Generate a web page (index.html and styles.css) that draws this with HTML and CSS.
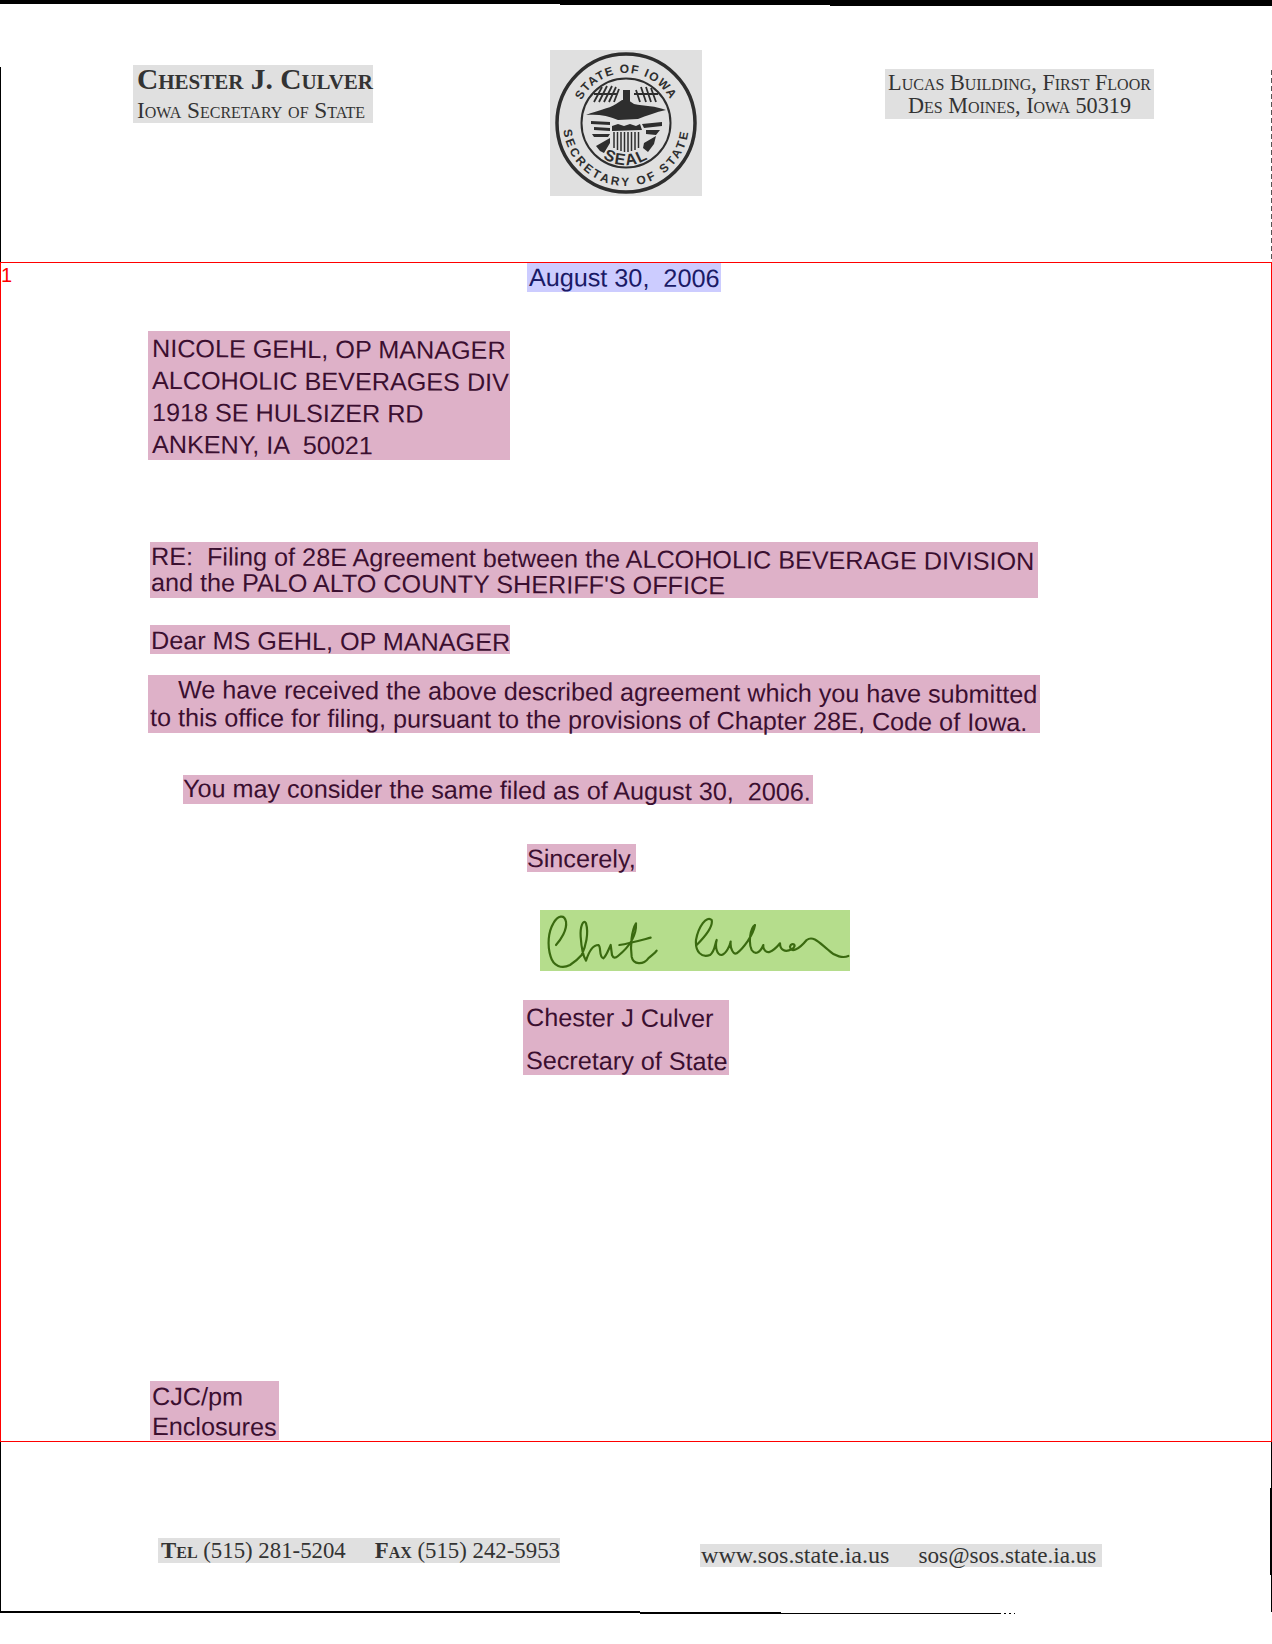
FILE: index.html
```html
<!DOCTYPE html>
<html lang="en">
<head>
<meta charset="utf-8">
<title>Letter from the Iowa Secretary of State</title>
<link rel="stylesheet" href="styles.css">
</head>
<body>
<main class="sheet">
  <header class="letterhead">
    <div class="hd hd-name">
      <div class="hd-big">Chester J. Culver</div>
      <div class="hd-small">Iowa Secretary of State</div>
    </div>
    <div class="hd hd-seal">
      <svg class="seal" viewBox="0 0 152 146" role="img" aria-label="Seal of the Secretary of State of Iowa">
        <defs>
          <path id="arcTop" d="M26 73 A50 50 0 0 1 126 73"/>
          <path id="arcBottom" d="M13 73 A63 63 0 0 0 139 73"/>
          <path id="arcSeal" d="M34 73 A42 42 0 0 0 118 73"/>
        </defs>
        <circle class="ring-outer" cx="76" cy="73" r="69"/>
        <circle class="ring-inner" cx="76" cy="73" r="44.500"/>
        <text class="seal-text"><textPath href="#arcTop" startOffset="50%" text-anchor="middle">STATE OF IOWA</textPath></text>
        <text class="seal-text seal-text-low"><textPath href="#arcBottom" startOffset="50%" text-anchor="middle">SECRETARY OF STATE</textPath></text>
        <path class="ink" d="M36 65 C48 60 58 59 66 54 L72 50 L78 50 L84 54 C94 56 106 56 116 60 C106 62 96 66 88 69 L68 70 C58 65 46 64 36 65Z"/>
        <path class="hatch" d="M44 52 L52 37 M49 52 L57 36 M54 52 L62 36 M59 52 L66 37 M64 52 L69 39 M44 44 H68 M86 40 L90 52 M91 37 L96 52 M96 37 L101 52 M101 38 L106 52 M84 44 H108"/>
        <path class="ink" d="M73 40 h7 v14 h-7Z"/>
        <path class="ink" d="M41 71 L60 72 L60 75 L41 74Z M44 77 L60 78 L60 81 L44 80Z M42 84 L60 84 L58 87 L44 87Z"/>
        <path class="ink" d="M62 76 L68 74 L74 76 L80 74 L86 76 L90 74 L92 80 L62 81Z M92 74 L112 72 L112 76 L94 78Z M96 80 L110 80 L106 85 L96 84Z"/>
        <path class="stripes" d="M64 82 V98 M67.500 82 V100 M71 82 V101 M74.500 82 V102 M78 82 V102 M81.500 82 V101 M85 82 V100 M88.500 82 V98"/>
        <path class="ink" d="M46 96 L60 88 L60 93 L54 103 L50 101Z M94 93 L106 86 L104 94 L98 102 L93 98Z"/>
        <text class="seal-word"><textPath href="#arcSeal" startOffset="50%" text-anchor="middle">SEAL</textPath></text>
      </svg>
    </div>
    <div class="hd hd-addr">
      <div>Lucas Building, First Floor</div>
      <div>Des Moines, Iowa 50319</div>
    </div>
  </header>

  <div class="block blue date"><span class="line">August 30,  2006</span></div>

  <div class="block pink address">
    <span class="line">NICOLE GEHL, OP MANAGER</span>
    <span class="line">ALCOHOLIC BEVERAGES DIV</span>
    <span class="line">1918 SE HULSIZER RD</span>
    <span class="line">ANKENY, IA  50021</span>
  </div>

  <div class="block pink re">
    <span class="line">RE:  Filing of 28E Agreement between the ALCOHOLIC BEVERAGE DIVISION</span>
    <span class="line">and the PALO ALTO COUNTY SHERIFF'S OFFICE</span>
  </div>

  <div class="block pink dear"><span class="line">Dear MS GEHL, OP MANAGER</span></div>

  <div class="block pink body-para">
    <span class="line first">We have received the above described agreement which you have submitted</span>
    <span class="line">to this office for filing, pursuant to the provisions of Chapter 28E, Code of Iowa.</span>
  </div>

  <div class="block pink filed"><span class="line">You may consider the same filed as of August 30,  2006.</span></div>

  <div class="block pink sincerely"><span class="line">Sincerely,</span></div>

  <div class="block signature">
    <svg class="sig" viewBox="60 60 930 183" role="img" aria-label="Handwritten signature">
      <path d="M108 165 C122 150 142 120 138 95 C133 72 113 76 100 100 C85 125 81 165 92 200 C100 228 125 238 150 225 C165 215 175 207 185 195 C197 170 207 130 198 100 C190 85 180 110 182 140 C184 170 190 200 198 212 C205 190 215 165 235 165 C245 170 235 200 250 205 C258 200 265 180 272 165 L276 195 C280 205 286 205 294 198 C322 175 350 140 348 100 C335 120 330 170 335 200 C340 225 370 225 385 205 C395 195 405 190 410 182"/>
      <path d="M298 165 C330 160 365 150 392 143"/>
      <path d="M530 165 C555 140 580 110 575 90 C560 75 535 110 528 150 C525 185 545 205 570 195 C585 185 585 160 590 150 C585 170 590 195 605 195 C620 190 630 165 632 155 C630 175 640 195 650 190 C670 175 700 135 705 105 C690 115 685 160 695 180 C705 195 720 190 730 165 C728 180 740 190 750 185 C765 180 775 165 780 160 C780 180 795 188 815 178 C835 165 815 155 810 170 C812 190 835 180 860 150 C880 135 900 160 925 180 C945 200 970 205 985 198"/>
    </svg>
  </div>

  <div class="block pink signer">
    <span class="line">Chester J Culver</span>
    <span class="line">Secretary of State</span>
  </div>

  <div class="block pink initials">
    <span class="line">CJC/pm</span>
    <span class="line">Enclosures</span>
  </div>

  <footer class="contact">
    <div class="hd ft-phone"><span class="sc">Tel</span> (515) 281-5204<span class="ft-gap"></span><span class="sc">Fax</span> (515) 242-5953</div>
    <div class="hd ft-web">www.sos.state.ia.us<span class="ft-gap"></span><span class="ft-mail">sos@sos.state.ia.us</span></div>
  </footer>

  <div class="edge edge-top"></div>
  <div class="edge edge-top-mid"></div>
  <div class="edge edge-top-right"></div>
  <div class="edge edge-left"></div>
  <div class="edge edge-right"></div>
  <div class="edge edge-right-low"></div>
  <div class="edge edge-right-thick"></div>
  <div class="edge edge-bottom"></div>
  <div class="edge edge-bottom-mid"></div>
  <div class="edge edge-bottom-thin"></div>
  <div class="edge edge-bottom-dots"></div>
  <div class="frame"><span class="frame-num">1</span></div>
</main>
</body>
</html>
```

FILE: styles.css
```css
* { box-sizing: border-box; }
html, body { margin: 0; background: #fff; }

.sheet {
  position: relative;
  width: 1272px;
  height: 1644px;
  overflow: hidden;
  font-family: "Liberation Sans", Arial, sans-serif;
}

/* letterhead */
.letterhead {
  display: flex;
  align-items: flex-start;
  height: 263px;
  padding: 50px 0 0 133px;
}
.hd {
  background: #e0e0e0;
  color: #333;
  font-family: "Liberation Serif", "Times New Roman", serif;
}
.hd-name {
  width: 240px;
  height: 58px;
  margin-top: 15px;
  padding: 0 0 0 4px;
  white-space: nowrap;
  font-variant: small-caps;
}
.hd-big {
  font-size: 29.400px;
  font-weight: bold;
  line-height: 29px;
}
.hd-small {
  margin-top: 4px;
  font-size: 23.300px;
  line-height: 24px;
}
.hd-seal {
  width: 152px;
  height: 146px;
  margin-left: 177px;
}
.seal { display: block; width: 152px; height: 146px; }
.ring-outer { fill: none; stroke: #2e2e2e; stroke-width: 3.500; }
.ring-inner { fill: none; stroke: #2e2e2e; stroke-width: 2; }
.seal-text {
  font-family: "Liberation Sans", Arial, sans-serif;
  font-size: 12px;
  font-weight: bold;
  letter-spacing: 1.300px;
  fill: #2e2e2e;
}
.seal-text-low { letter-spacing: 2.800px; }
.seal-word {
  font-family: "Liberation Sans", Arial, sans-serif;
  font-size: 16px;
  font-weight: bold;
  letter-spacing: 1.500px;
  fill: #2e2e2e;
}
.ink { fill: #2e2e2e; }
.stripes { fill: none; stroke: #2e2e2e; stroke-width: 1.500; }
.hatch { fill: none; stroke: #2e2e2e; stroke-width: 1.800; }
.hd-addr {
  width: 269px;
  height: 50px;
  margin: 19px 0 0 183px;
  padding-top: 2px;
  font-size: 22.200px;
  line-height: 23px;
  text-align: center;
  font-variant: small-caps;
  white-space: nowrap;
}

/* scanned text blocks */
.block { font-size: 25.200px; }
.pink { background: #deb1c8; color: #3b0f30; }
.blue { background: #ccccff; color: #1a1a66; }
.line {
  display: block;
  white-space: pre;
  transform: rotate(.33deg);
  transform-origin: left center;
}
.date { width: 194px; height: 29px; margin: 0 0 0 527px; padding-left: 2px; line-height: 29px; }
.address { width: 362px; height: 129px; margin: 39px 0 0 148px; padding: 1px 0 0 4px; line-height: 32px; }
.re { width: 888px; height: 56px; margin: 82px 0 0 150px; padding: 1px 0 0 1px; line-height: 26px; }
.dear { width: 360px; height: 29px; margin: 27px 0 0 150px; padding-left: 1px; line-height: 30px; }
.body-para { width: 892px; height: 58px; margin: 21px 0 0 148px; padding: 0 0 0 2px; line-height: 28px; }
.first { padding-left: 28px; }
.filed { width: 630px; height: 29px; margin: 42px 0 0 183px; line-height: 27px; }
.sincerely { width: 109px; height: 28px; margin: 40px 0 0 527px; line-height: 28px; }
.signature { width: 310px; height: 61px; margin: 38px 0 0 540px; background: #b5dd8c; }
.sig { display: block; width: 310px; height: 61px; }
.sig path { fill: none; stroke: #3a6a10; stroke-width: 6.500; stroke-linecap: round; stroke-linejoin: round; }
.signer { width: 206px; height: 75px; margin: 29px 0 0 523px; padding-left: 3px; line-height: 34px; }
.signer .line + .line { margin-top: 9px; }
.initials { width: 129px; height: 59px; margin: 306px 0 0 150px; padding: 0 0 0 2px; line-height: 30px; }

/* footer */
.contact {
  display: flex;
  align-items: flex-start;
  height: 40px;
  margin-top: 98px;
  padding-left: 158px;
  white-space: nowrap;
}
.ft-phone { width: 402px; height: 25px; padding-left: 3px; font-size: 22.800px; line-height: 25px; }
.ft-web { width: 402px; height: 23px; margin: 6px 0 0 140px; padding-left: 1px; font-size: 24.100px; line-height: 23px; }
.ft-mail { font-size: 23.200px; }
.sc { font-variant: small-caps; font-weight: bold; }
.ft-gap { display: inline-block; width: 29px; }

/* scan edges and page frame, drawn over the content */
.edge { position: absolute; background: #000; }
.edge-top { left: 0; top: 0; width: 1272px; height: 4px; }
.edge-top-mid { left: 560px; top: 4px; width: 712px; height: 1px; }
.edge-top-right { left: 830px; top: 5px; width: 442px; height: 1px; }
.edge-left { left: 0; top: 67px; width: 1px; height: 1545px; }
.edge-right {
  left: 1271px;
  top: 70px;
  width: 1px;
  height: 192px;
  background: repeating-linear-gradient(to bottom, #555 0 5px, transparent 5px 8px);
}
.edge-right-low { left: 1271px; top: 1442px; width: 1px; height: 170px; }
.edge-right-thick { left: 1270px; top: 1488px; width: 2px; height: 87px; }
.edge-bottom { left: 0; top: 1611px; width: 640px; height: 2px; }
.edge-bottom-mid { left: 640px; top: 1612px; width: 141px; height: 2px; }
.edge-bottom-thin { left: 781px; top: 1613px; width: 218px; height: 1px; }
.edge-bottom-dots {
  left: 999px;
  top: 1613px;
  width: 16px;
  height: 1px;
  background: repeating-linear-gradient(to right, #000 0 2px, transparent 2px 5px);
}
.frame {
  position: absolute;
  left: 0;
  top: 262px;
  width: 1272px;
  height: 1180px;
  border: 1px solid #f00;
  color: #f00;
  font-size: 20px;
  line-height: 24px;
}
.frame-num { display: block; }
```
